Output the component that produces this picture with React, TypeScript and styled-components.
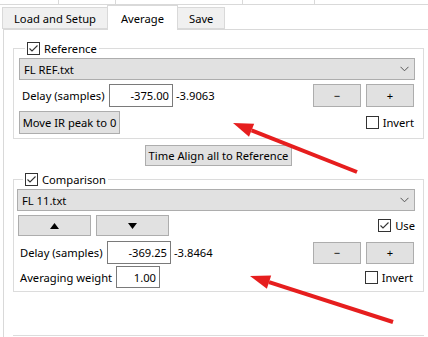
import React from 'react';
import styled, { createGlobalStyle } from 'styled-components';

const GlobalStyle = createGlobalStyle`
  html, body {
    margin: 0;
    padding: 0;
    background: #ffffff;
  }
  body {
    font-family: 'Segoe UI', 'Noto Sans', 'Liberation Sans', sans-serif;
    font-size: 11.2px;
    color: #000;
    white-space: nowrap;
  }
`;

const Window = styled.div`
  position: relative;
  width: 428px;
  height: 337px;
  overflow: hidden;
  background: #fff;
  display: flex;
  flex-direction: column;
`;

const TopStrip = styled.div`
  flex: none;
  height: 4px;
  border-bottom: 1px solid #d9d9d9;
  display: flex;
`;

const TopCell = styled.div<{ $w: number }>`
  width: ${(p) => p.$w}px;
  border-right: 1px solid #d9d9d9;
`;

const TabBar = styled.div`
  flex: none;
  height: 24px;
  display: flex;
  align-items: flex-end;
  padding-left: 3px;
`;

const Tab = styled.div<{ $active?: boolean }>`
  position: relative;
  z-index: ${(p) => (p.$active ? 1 : 0)};
  height: ${(p) => (p.$active ? 25 : 22)}px;
  margin-bottom: ${(p) => (p.$active ? -1 : 0)}px;
  padding: 0 ${(p) => (p.$active ? 13 : 11)}px;
  padding-top: ${(p) => (p.$active ? 0 : 1)}px;
  display: flex;
  align-items: center;
  box-sizing: border-box;
  background: ${(p) => (p.$active ? '#ffffff' : '#f0f0f0')};
  border: 1px solid #d9d9d9;
  border-bottom: ${(p) => (p.$active ? 'none' : '1px solid #d9d9d9')};
  margin-left: -1px;
`;

const Panel = styled.div`
  flex: 1;
  min-height: 0;
  overflow: hidden;
  margin-left: 3px;
  border-left: 1px solid #d9d9d9;
  border-top: 1px solid #d9d9d9;
  padding: 10px 4px 0 9px;
  display: flex;
  flex-direction: column;
`;

const Group = styled.fieldset<{ $pad: number; $bottom: number }>`
  flex: none;
  margin: 0;
  padding: 0 4px ${(p) => p.$bottom}px ${(p) => p.$pad}px;
  border: 1px solid #dcdcdc;
  min-width: 0;
  display: flex;
  flex-direction: column;
`;

const Legend = styled.legend`
  height: 17px;
  padding: 0 2px;
  margin-left: 6px;
  display: flex;
  align-items: center;
`;

const Box = styled.span`
  width: 13px;
  height: 13px;
  box-sizing: border-box;
  border: 1px solid #333;
  background: #fff;
  display: inline-flex;
  align-items: center;
  justify-content: center;
  flex: none;
`;

const CheckLabel = styled.label<{ $right?: number }>`
  display: flex;
  align-items: center;
  gap: 4px;
  margin-right: ${(p) => p.$right ?? 0}px;
`;

const Combo = styled.div`
  margin-top: 1px;
  height: 22px;
  box-sizing: border-box;
  border: 1px solid #adadad;
  background: #e1e1e1;
  display: flex;
  align-items: center;
  justify-content: space-between;
  padding: 0 5px 0 4px;
  margin-right: 4px;
`;

const Row = styled.div<{ $h: number; $top: number }>`
  height: ${(p) => p.$h}px;
  margin-top: ${(p) => p.$top}px;
  display: flex;
  align-items: center;
`;

const Label = styled.span<{ $w: number }>`
  width: ${(p) => p.$w}px;
  margin-left: 3px;
  flex: none;
`;

const Field = styled.div<{ $w: number; $h: number }>`
  width: ${(p) => p.$w}px;
  height: ${(p) => p.$h}px;
  box-sizing: border-box;
  border: 1px solid #7a7a7a;
  background: #fff;
  display: flex;
  align-items: center;
  justify-content: flex-end;
  padding-right: 3px;
  flex: none;
`;

const Readout = styled.span`
  margin-left: 3px;
`;

const Spacer = styled.div`
  flex: 1;
`;

const Button = styled.div<{ $w: number; $h: number; $left?: number }>`
  width: ${(p) => p.$w}px;
  height: ${(p) => p.$h}px;
  margin-left: ${(p) => p.$left ?? 0}px;
  box-sizing: border-box;
  border: 1px solid #adadad;
  background: #e1e1e1;
  display: flex;
  align-items: center;
  justify-content: center;
  flex: none;
`;

const Steppers = styled.div`
  display: flex;
  gap: 5px;
  margin-right: 5px;
`;

const CenterRow = styled.div`
  flex: none;
  display: flex;
  justify-content: center;
  margin: 6px 0 5px;
`;

const Tail = styled.div`
  flex: none;
  margin-top: 43px;
  border-top: 1px solid #dcdcdc;
  height: 0;
`;

const Overlay = styled.svg`
  position: absolute;
  left: 0;
  top: 0;
  pointer-events: none;
`;

const Check = ({ checked }: { checked?: boolean }) => (
  <Box>
    {checked && (
      <svg width="11" height="11" viewBox="0 0 11 11">
        <path d="M1.5 5.5 L4 8 L9.5 2.5" fill="none" stroke="#333" strokeWidth="1.1" />
      </svg>
    )}
  </Box>
);

const Chevron = () => (
  <svg width="9" height="6" viewBox="0 0 9 6">
    <path d="M0.5 0.8 L4.5 4.8 L8.5 0.8" fill="none" stroke="#555" strokeWidth="1" />
  </svg>
);

const Triangle = ({ up }: { up?: boolean }) => (
  <svg width="9" height="6" viewBox="0 0 9 6">
    <polygon points={up ? '4.5,0 9,6 0,6' : '0,0 9,0 4.5,6'} fill="#000" />
  </svg>
);

const Arrow = ({ tail, tip }: { tail: [number, number]; tip: [number, number] }) => {
  const dx = tip[0] - tail[0];
  const dy = tip[1] - tail[1];
  const len = Math.hypot(dx, dy);
  const ux = dx / len;
  const uy = dy / len;
  const bx = tip[0] - 20 * ux;
  const by = tip[1] - 20 * uy;
  const nx = -uy * 7;
  const ny = ux * 7;
  return (
    <>
      <line x1={tail[0]} y1={tail[1]} x2={bx} y2={by} stroke="#e61e1e" strokeWidth="4" />
      <polygon
        points={`${tip[0]},${tip[1]} ${bx + nx},${by + ny} ${bx - nx},${by - ny}`}
        fill="#e61e1e"
      />
    </>
  );
};

export default function App() {
  return (
    <Window>
      <GlobalStyle />
      <TopStrip>
        <TopCell $w={58} />
        <TopCell $w={56} />
        <TopCell $w={126} />
        <TopCell $w={71} />
      </TopStrip>
      <TabBar>
        <Tab>Load and Setup</Tab>
        <Tab $active>Average</Tab>
        <Tab>Save</Tab>
      </TabBar>
      <Panel>
        <Group $pad={5} $bottom={4}>
          <Legend>
            <CheckLabel>
              <Check checked />
              Reference
            </CheckLabel>
          </Legend>
          <Combo>
            <span>FL REF.txt</span>
            <Chevron />
          </Combo>
          <Row $h={23} $top={4}>
            <Label $w={87}>Delay (samples)</Label>
            <Field $w={64} $h={23}>-375.00</Field>
            <Readout>-3.9063</Readout>
            <Spacer />
            <Steppers>
              <Button $w={48} $h={23}>−</Button>
              <Button $w={48} $h={23}>+</Button>
            </Steppers>
          </Row>
          <Row $h={23} $top={4}>
            <Button $w={101} $h={23}>Move IR peak to 0</Button>
            <Spacer />
            <CheckLabel $right={5}>
              <Check />
              Invert
            </CheckLabel>
          </Row>
        </Group>
        <CenterRow>
          <Button $w={147} $h={21}>Time Align all to Reference</Button>
        </CenterRow>
        <Group $pad={3} $bottom={3}>
          <Legend>
            <CheckLabel>
              <Check checked />
              Comparison
            </CheckLabel>
          </Legend>
          <Combo>
            <span>FL 11.txt</span>
            <Chevron />
          </Combo>
          <Row $h={21} $top={4}>
            <Button $w={73} $h={21} $left={1}>
              <Triangle up />
            </Button>
            <Button $w={73} $h={21} $left={5}>
              <Triangle />
            </Button>
            <Spacer />
            <CheckLabel $right={4}>
              <Check checked />
              Use
            </CheckLabel>
          </Row>
          <Row $h={23} $top={5}>
            <Label $w={87}>Delay (samples)</Label>
            <Field $w={64} $h={23}>-369.25</Field>
            <Readout>-3.8464</Readout>
            <Spacer />
            <Steppers>
              <Button $w={48} $h={22}>−</Button>
              <Button $w={48} $h={22}>+</Button>
            </Steppers>
          </Row>
          <Row $h={22} $top={2}>
            <Label $w={96}>Averaging weight</Label>
            <Field $w={44} $h={22}>1.00</Field>
            <Spacer />
            <CheckLabel $right={6}>
              <Check />
              Invert
            </CheckLabel>
          </Row>
        </Group>
        <Tail />
      </Panel>
      <Overlay width="428" height="337" viewBox="0 0 428 337">
        <Arrow tail={[357, 172]} tip={[233, 123]} />
        <Arrow tail={[393, 322]} tip={[250, 276]} />
      </Overlay>
    </Window>
  );
}
